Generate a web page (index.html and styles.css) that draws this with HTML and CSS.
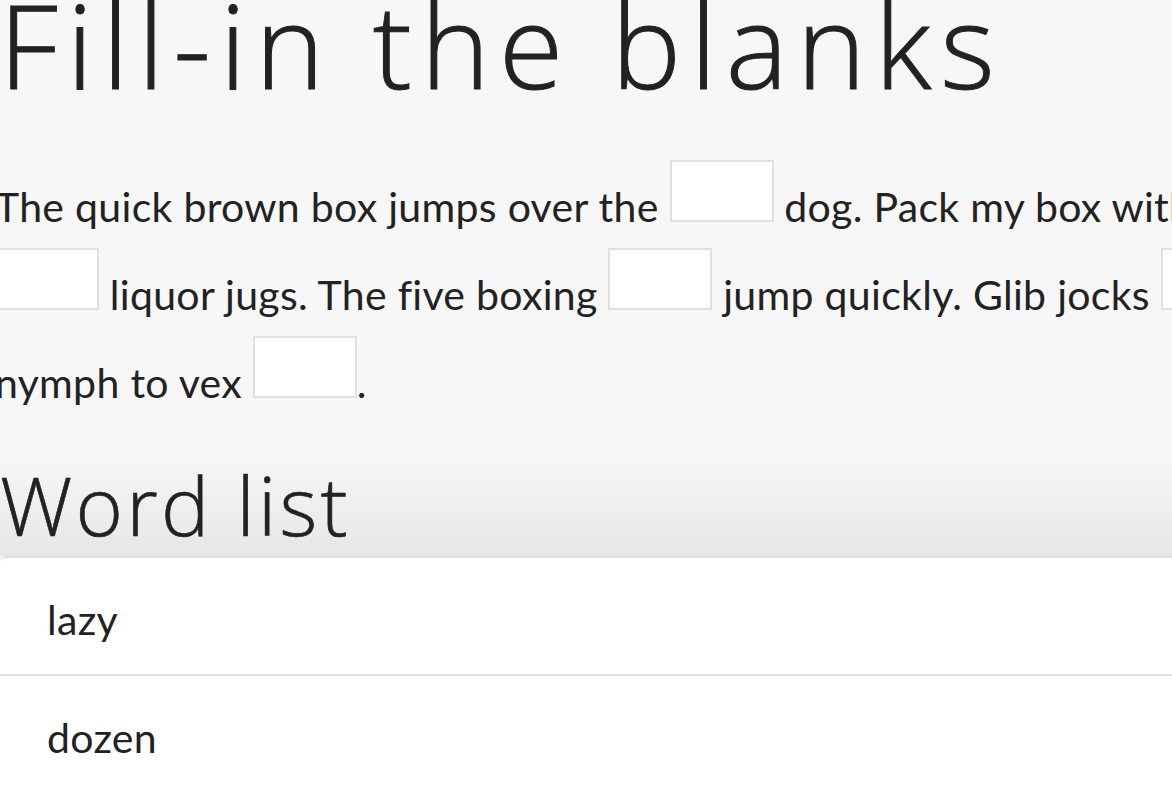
FILE: index.html
```html
<!DOCTYPE html>
<html lang="en">
<head>
<meta charset="utf-8">
<title>Fill-in the blanks</title>
<link rel="stylesheet" href="styles.css">
</head>
<body>
<main class="page">
  <h1 class="title">Fill-in the blanks</h1>
  <p class="passage">The quick brown box jumps over the <span class="blank"></span> dog. Pack my box with <span class="blank"></span> liquor jugs. The five boxing <span class="blank"></span> jump quickly. Glib jocks <span class="blank"></span> nymph to vex <span class="blank"></span>.</p>
  <section class="words">
    <div class="words-head">
      <h2 class="subtitle">Word list</h2>
    </div>
    <ul class="word-list">
      <li class="word">lazy</li>
      <li class="word">dozen</li>
      <li class="word">wizards</li>
    </ul>
  </section>
</main>
</body>
</html>
```
FILE: styles.css
```css
html, body {
  margin: 0;
  padding: 0;
  background: #f7f7f7;
  overflow: hidden;
}

.page {
  margin-left: -5px;
  width: 1290px;
  color: #222;
}

.title {
  margin: -15px 0 0 4px;
  font-family: "Open Sans", "Lato", sans-serif;
  font-weight: 300;
  font-size: 117px;
  line-height: 117px;
  letter-spacing: 9px;
  -webkit-text-stroke: 1px #222;
}

.passage {
  margin: 58px 0 0;
  font-family: "Lato", "Open Sans", sans-serif;
  font-size: 41px;
  letter-spacing: 0.3px;
  line-height: 82px;
  color: #222;
}

.blank {
  display: inline-block;
  width: 100px;
  height: 58px;
  border: 2px solid #e0e0e0;
  background: #fff;
  vertical-align: baseline;
}

.words {
  margin-top: 32px;
}

.words-head {
  padding: 8px 0 11px 5px;
  background: linear-gradient(#f7f7f7, #e6e6e6);
}

.subtitle {
  margin: 0;
  font-family: "Open Sans", "Lato", sans-serif;
  font-weight: 300;
  font-size: 81px;
  line-height: 81px;
  letter-spacing: 3.2px;
  -webkit-text-stroke: 0.6px #222;
}

.word-list {
  list-style: none;
  margin: 0 0 0 5px;
  padding: 0;
  background: #fff;
  border-top: 2px solid #e0e0e0;
  border-radius: 6px 0 0 0;
}

.word {
  padding: 38px 0 30px 47px;
  font-family: "Lato", "Open Sans", sans-serif;
  font-size: 41px;
  letter-spacing: 0.3px;
  line-height: 48px;
  border-bottom: 2px solid #e0e0e0;
}
```
